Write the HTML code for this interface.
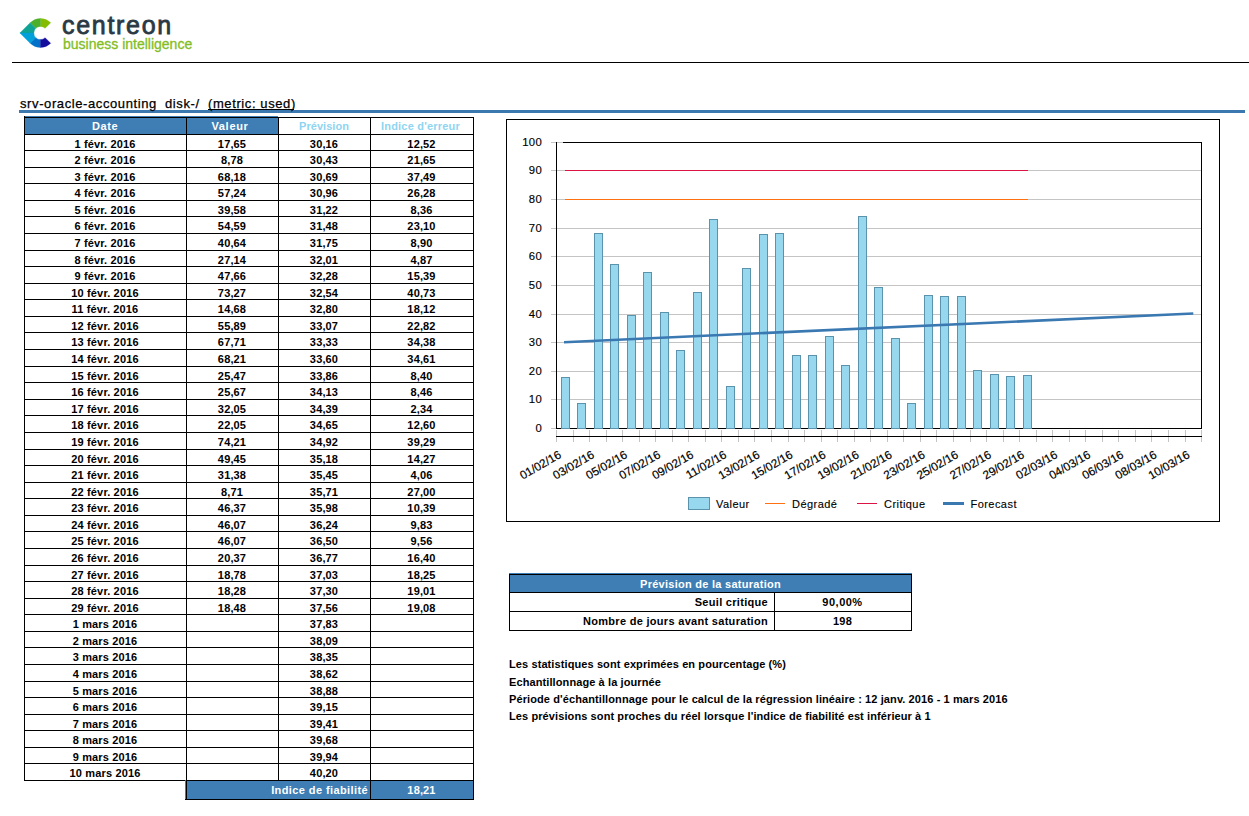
<!DOCTYPE html>
<html><head><meta charset="utf-8"><title>Centreon BI report</title><style>
html,body{margin:0;padding:0;background:#fff}
body{width:1249px;height:816px;position:relative;overflow:hidden;font-family:'Liberation Sans',sans-serif}
.t{position:absolute;white-space:nowrap;line-height:1}
.c{position:absolute;text-align:center;letter-spacing:0.15px;font:bold 11px 'Liberation Sans',sans-serif;color:#000;white-space:nowrap;overflow:visible}
.hl{position:absolute;height:1px;background:#000}
.vl{position:absolute;width:1px;background:#000}
</style></head>
<body>
<svg style="position:absolute;left:0;top:0" width="60" height="60" viewBox="0 0 60 60"><path fill="#84bd00" stroke="#84bd00" stroke-width="0.3" d="M40.450 18.450 A14.55 14.55 0 0 1 50.738 22.712 L45.117 28.333 A6.6 6.6 0 0 0 40.450 26.400 Z"/><path fill="#4baf2a" stroke="#4baf2a" stroke-width="0.3" d="M30.162 22.712 A14.55 14.55 0 0 1 40.450 18.450 L40.450 26.400 A6.6 6.6 0 0 0 35.783 28.333 Z"/><path fill="#0fa394" stroke="#0fa394" stroke-width="0.3" d="M19.873 33.000 L30.162 22.712 L35.783 28.333 A6.6 6.6 0 0 0 33.850 33.000 Z"/><path fill="#00a0da" stroke="#00a0da" stroke-width="0.3" d="M33.850 33.000 A6.6 6.6 0 0 0 35.783 37.667 L30.162 43.288 L19.873 33.000 Z"/><path fill="#0071c9" stroke="#0071c9" stroke-width="0.3" d="M40.450 47.550 A14.55 14.55 0 0 1 30.162 43.288 L35.783 37.667 A6.6 6.6 0 0 0 40.450 39.600 Z"/><path fill="#140c9c" stroke="#140c9c" stroke-width="0.3" d="M50.738 43.288 A14.55 14.55 0 0 1 40.450 47.550 L40.450 39.600 A6.6 6.6 0 0 0 45.117 37.667 Z"/></svg>
<div class="t" style="left:62px;top:11px;font:25px 'Liberation Sans',sans-serif;color:#2b3944;letter-spacing:1.7px;-webkit-text-stroke:0.8px #2b3944">centreon</div>
<div class="t" style="left:63px;top:36px;font:14px 'Liberation Sans',sans-serif;color:#84bd1f;letter-spacing:0px;-webkit-text-stroke:0.3px #84bd1f">business intelligence</div>
<div style="position:absolute;left:12px;top:62px;width:1237px;height:1px;background:#000"></div>
<div style="position:absolute;left:19px;top:110px;width:1226px;height:3px;background:#3b78b0"></div>
<div class="t" style="left:20px;top:95.5px;font:13px 'Liberation Sans',sans-serif;color:#000;letter-spacing:0.6px;-webkit-text-stroke:0.25px #000">srv-oracle-accounting</div>
<div class="t" style="left:165px;top:95.5px;font:13px 'Liberation Sans',sans-serif;color:#000;letter-spacing:0.6px;-webkit-text-stroke:0.25px #000">disk-/</div>
<div class="t" style="left:208px;top:95.5px;font:13px 'Liberation Sans',sans-serif;color:#000;letter-spacing:0.6px;-webkit-text-stroke:0.25px #000">(metric: used)</div>
<div style="position:absolute;left:208px;top:109px;width:86px;height:1px;background:#000"></div>
<div style="position:absolute;left:24px;top:116px;width:254px;height:18px;background:#3e7eb4"></div>
<div class="vl" style="left:24px;top:116px;height:2px"></div>
<div class="c" style="left:24px;width:162px;top:117px;height:17px;line-height:19px;color:#fff;letter-spacing:0.6px">Date</div>
<div class="c" style="left:184px;width:92px;top:117px;height:17px;line-height:19px;color:#fff;letter-spacing:0.7px">Valeur</div>
<div class="c" style="left:278px;width:92px;top:117px;height:17px;line-height:19px;color:#8fd5f0;letter-spacing:0.05px">Prévision</div>
<div class="c" style="left:369px;width:103px;top:117px;height:17px;line-height:19px;color:#8fd5f0;letter-spacing:0.2px">Indice d'erreur</div>
<div class="c" style="left:24px;width:162px;top:134px;height:16px;line-height:21px">1 févr. 2016</div>
<div class="c" style="left:186px;width:92px;top:134px;height:16px;line-height:21px">17,65</div>
<div class="c" style="left:278px;width:92px;top:134px;height:16px;line-height:21px">30,16</div>
<div class="c" style="left:370px;width:103px;top:134px;height:16px;line-height:21px">12,52</div>
<div class="c" style="left:24px;width:162px;top:150px;height:17px;line-height:21px">2 févr. 2016</div>
<div class="c" style="left:186px;width:92px;top:150px;height:17px;line-height:21px">8,78</div>
<div class="c" style="left:278px;width:92px;top:150px;height:17px;line-height:21px">30,43</div>
<div class="c" style="left:370px;width:103px;top:150px;height:17px;line-height:21px">21,65</div>
<div class="c" style="left:24px;width:162px;top:167px;height:16px;line-height:21px">3 févr. 2016</div>
<div class="c" style="left:186px;width:92px;top:167px;height:16px;line-height:21px">68,18</div>
<div class="c" style="left:278px;width:92px;top:167px;height:16px;line-height:21px">30,69</div>
<div class="c" style="left:370px;width:103px;top:167px;height:16px;line-height:21px">37,49</div>
<div class="c" style="left:24px;width:162px;top:183px;height:17px;line-height:21px">4 févr. 2016</div>
<div class="c" style="left:186px;width:92px;top:183px;height:17px;line-height:21px">57,24</div>
<div class="c" style="left:278px;width:92px;top:183px;height:17px;line-height:21px">30,96</div>
<div class="c" style="left:370px;width:103px;top:183px;height:17px;line-height:21px">26,28</div>
<div class="c" style="left:24px;width:162px;top:200px;height:16px;line-height:21px">5 févr. 2016</div>
<div class="c" style="left:186px;width:92px;top:200px;height:16px;line-height:21px">39,58</div>
<div class="c" style="left:278px;width:92px;top:200px;height:16px;line-height:21px">31,22</div>
<div class="c" style="left:370px;width:103px;top:200px;height:16px;line-height:21px">8,36</div>
<div class="c" style="left:24px;width:162px;top:216px;height:17px;line-height:21px">6 févr. 2016</div>
<div class="c" style="left:186px;width:92px;top:216px;height:17px;line-height:21px">54,59</div>
<div class="c" style="left:278px;width:92px;top:216px;height:17px;line-height:21px">31,48</div>
<div class="c" style="left:370px;width:103px;top:216px;height:17px;line-height:21px">23,10</div>
<div class="c" style="left:24px;width:162px;top:233px;height:17px;line-height:21px">7 févr. 2016</div>
<div class="c" style="left:186px;width:92px;top:233px;height:17px;line-height:21px">40,64</div>
<div class="c" style="left:278px;width:92px;top:233px;height:17px;line-height:21px">31,75</div>
<div class="c" style="left:370px;width:103px;top:233px;height:17px;line-height:21px">8,90</div>
<div class="c" style="left:24px;width:162px;top:250px;height:16px;line-height:21px">8 févr. 2016</div>
<div class="c" style="left:186px;width:92px;top:250px;height:16px;line-height:21px">27,14</div>
<div class="c" style="left:278px;width:92px;top:250px;height:16px;line-height:21px">32,01</div>
<div class="c" style="left:370px;width:103px;top:250px;height:16px;line-height:21px">4,87</div>
<div class="c" style="left:24px;width:162px;top:266px;height:17px;line-height:21px">9 févr. 2016</div>
<div class="c" style="left:186px;width:92px;top:266px;height:17px;line-height:21px">47,66</div>
<div class="c" style="left:278px;width:92px;top:266px;height:17px;line-height:21px">32,28</div>
<div class="c" style="left:370px;width:103px;top:266px;height:17px;line-height:21px">15,39</div>
<div class="c" style="left:24px;width:162px;top:283px;height:16px;line-height:21px">10 févr. 2016</div>
<div class="c" style="left:186px;width:92px;top:283px;height:16px;line-height:21px">73,27</div>
<div class="c" style="left:278px;width:92px;top:283px;height:16px;line-height:21px">32,54</div>
<div class="c" style="left:370px;width:103px;top:283px;height:16px;line-height:21px">40,73</div>
<div class="c" style="left:24px;width:162px;top:299px;height:17px;line-height:21px">11 févr. 2016</div>
<div class="c" style="left:186px;width:92px;top:299px;height:17px;line-height:21px">14,68</div>
<div class="c" style="left:278px;width:92px;top:299px;height:17px;line-height:21px">32,80</div>
<div class="c" style="left:370px;width:103px;top:299px;height:17px;line-height:21px">18,12</div>
<div class="c" style="left:24px;width:162px;top:316px;height:16px;line-height:21px">12 févr. 2016</div>
<div class="c" style="left:186px;width:92px;top:316px;height:16px;line-height:21px">55,89</div>
<div class="c" style="left:278px;width:92px;top:316px;height:16px;line-height:21px">33,07</div>
<div class="c" style="left:370px;width:103px;top:316px;height:16px;line-height:21px">22,82</div>
<div class="c" style="left:24px;width:162px;top:332px;height:17px;line-height:21px">13 févr. 2016</div>
<div class="c" style="left:186px;width:92px;top:332px;height:17px;line-height:21px">67,71</div>
<div class="c" style="left:278px;width:92px;top:332px;height:17px;line-height:21px">33,33</div>
<div class="c" style="left:370px;width:103px;top:332px;height:17px;line-height:21px">34,38</div>
<div class="c" style="left:24px;width:162px;top:349px;height:17px;line-height:21px">14 févr. 2016</div>
<div class="c" style="left:186px;width:92px;top:349px;height:17px;line-height:21px">68,21</div>
<div class="c" style="left:278px;width:92px;top:349px;height:17px;line-height:21px">33,60</div>
<div class="c" style="left:370px;width:103px;top:349px;height:17px;line-height:21px">34,61</div>
<div class="c" style="left:24px;width:162px;top:366px;height:16px;line-height:21px">15 févr. 2016</div>
<div class="c" style="left:186px;width:92px;top:366px;height:16px;line-height:21px">25,47</div>
<div class="c" style="left:278px;width:92px;top:366px;height:16px;line-height:21px">33,86</div>
<div class="c" style="left:370px;width:103px;top:366px;height:16px;line-height:21px">8,40</div>
<div class="c" style="left:24px;width:162px;top:382px;height:17px;line-height:21px">16 févr. 2016</div>
<div class="c" style="left:186px;width:92px;top:382px;height:17px;line-height:21px">25,67</div>
<div class="c" style="left:278px;width:92px;top:382px;height:17px;line-height:21px">34,13</div>
<div class="c" style="left:370px;width:103px;top:382px;height:17px;line-height:21px">8,46</div>
<div class="c" style="left:24px;width:162px;top:399px;height:16px;line-height:21px">17 févr. 2016</div>
<div class="c" style="left:186px;width:92px;top:399px;height:16px;line-height:21px">32,05</div>
<div class="c" style="left:278px;width:92px;top:399px;height:16px;line-height:21px">34,39</div>
<div class="c" style="left:370px;width:103px;top:399px;height:16px;line-height:21px">2,34</div>
<div class="c" style="left:24px;width:162px;top:415px;height:17px;line-height:21px">18 févr. 2016</div>
<div class="c" style="left:186px;width:92px;top:415px;height:17px;line-height:21px">22,05</div>
<div class="c" style="left:278px;width:92px;top:415px;height:17px;line-height:21px">34,65</div>
<div class="c" style="left:370px;width:103px;top:415px;height:17px;line-height:21px">12,60</div>
<div class="c" style="left:24px;width:162px;top:432px;height:17px;line-height:21px">19 févr. 2016</div>
<div class="c" style="left:186px;width:92px;top:432px;height:17px;line-height:21px">74,21</div>
<div class="c" style="left:278px;width:92px;top:432px;height:17px;line-height:21px">34,92</div>
<div class="c" style="left:370px;width:103px;top:432px;height:17px;line-height:21px">39,29</div>
<div class="c" style="left:24px;width:162px;top:449px;height:16px;line-height:21px">20 févr. 2016</div>
<div class="c" style="left:186px;width:92px;top:449px;height:16px;line-height:21px">49,45</div>
<div class="c" style="left:278px;width:92px;top:449px;height:16px;line-height:21px">35,18</div>
<div class="c" style="left:370px;width:103px;top:449px;height:16px;line-height:21px">14,27</div>
<div class="c" style="left:24px;width:162px;top:465px;height:17px;line-height:21px">21 févr. 2016</div>
<div class="c" style="left:186px;width:92px;top:465px;height:17px;line-height:21px">31,38</div>
<div class="c" style="left:278px;width:92px;top:465px;height:17px;line-height:21px">35,45</div>
<div class="c" style="left:370px;width:103px;top:465px;height:17px;line-height:21px">4,06</div>
<div class="c" style="left:24px;width:162px;top:482px;height:16px;line-height:21px">22 févr. 2016</div>
<div class="c" style="left:186px;width:92px;top:482px;height:16px;line-height:21px">8,71</div>
<div class="c" style="left:278px;width:92px;top:482px;height:16px;line-height:21px">35,71</div>
<div class="c" style="left:370px;width:103px;top:482px;height:16px;line-height:21px">27,00</div>
<div class="c" style="left:24px;width:162px;top:498px;height:17px;line-height:21px">23 févr. 2016</div>
<div class="c" style="left:186px;width:92px;top:498px;height:17px;line-height:21px">46,37</div>
<div class="c" style="left:278px;width:92px;top:498px;height:17px;line-height:21px">35,98</div>
<div class="c" style="left:370px;width:103px;top:498px;height:17px;line-height:21px">10,39</div>
<div class="c" style="left:24px;width:162px;top:515px;height:16px;line-height:21px">24 févr. 2016</div>
<div class="c" style="left:186px;width:92px;top:515px;height:16px;line-height:21px">46,07</div>
<div class="c" style="left:278px;width:92px;top:515px;height:16px;line-height:21px">36,24</div>
<div class="c" style="left:370px;width:103px;top:515px;height:16px;line-height:21px">9,83</div>
<div class="c" style="left:24px;width:162px;top:531px;height:17px;line-height:21px">25 févr. 2016</div>
<div class="c" style="left:186px;width:92px;top:531px;height:17px;line-height:21px">46,07</div>
<div class="c" style="left:278px;width:92px;top:531px;height:17px;line-height:21px">36,50</div>
<div class="c" style="left:370px;width:103px;top:531px;height:17px;line-height:21px">9,56</div>
<div class="c" style="left:24px;width:162px;top:548px;height:17px;line-height:21px">26 févr. 2016</div>
<div class="c" style="left:186px;width:92px;top:548px;height:17px;line-height:21px">20,37</div>
<div class="c" style="left:278px;width:92px;top:548px;height:17px;line-height:21px">36,77</div>
<div class="c" style="left:370px;width:103px;top:548px;height:17px;line-height:21px">16,40</div>
<div class="c" style="left:24px;width:162px;top:565px;height:16px;line-height:21px">27 févr. 2016</div>
<div class="c" style="left:186px;width:92px;top:565px;height:16px;line-height:21px">18,78</div>
<div class="c" style="left:278px;width:92px;top:565px;height:16px;line-height:21px">37,03</div>
<div class="c" style="left:370px;width:103px;top:565px;height:16px;line-height:21px">18,25</div>
<div class="c" style="left:24px;width:162px;top:581px;height:17px;line-height:21px">28 févr. 2016</div>
<div class="c" style="left:186px;width:92px;top:581px;height:17px;line-height:21px">18,28</div>
<div class="c" style="left:278px;width:92px;top:581px;height:17px;line-height:21px">37,30</div>
<div class="c" style="left:370px;width:103px;top:581px;height:17px;line-height:21px">19,01</div>
<div class="c" style="left:24px;width:162px;top:598px;height:16px;line-height:21px">29 févr. 2016</div>
<div class="c" style="left:186px;width:92px;top:598px;height:16px;line-height:21px">18,48</div>
<div class="c" style="left:278px;width:92px;top:598px;height:16px;line-height:21px">37,56</div>
<div class="c" style="left:370px;width:103px;top:598px;height:16px;line-height:21px">19,08</div>
<div class="c" style="left:24px;width:162px;top:614px;height:17px;line-height:21px">1 mars 2016</div>
<div class="c" style="left:278px;width:92px;top:614px;height:17px;line-height:21px">37,83</div>
<div class="c" style="left:24px;width:162px;top:631px;height:16px;line-height:21px">2 mars 2016</div>
<div class="c" style="left:278px;width:92px;top:631px;height:16px;line-height:21px">38,09</div>
<div class="c" style="left:24px;width:162px;top:647px;height:17px;line-height:21px">3 mars 2016</div>
<div class="c" style="left:278px;width:92px;top:647px;height:17px;line-height:21px">38,35</div>
<div class="c" style="left:24px;width:162px;top:664px;height:17px;line-height:21px">4 mars 2016</div>
<div class="c" style="left:278px;width:92px;top:664px;height:17px;line-height:21px">38,62</div>
<div class="c" style="left:24px;width:162px;top:681px;height:16px;line-height:21px">5 mars 2016</div>
<div class="c" style="left:278px;width:92px;top:681px;height:16px;line-height:21px">38,88</div>
<div class="c" style="left:24px;width:162px;top:697px;height:17px;line-height:21px">6 mars 2016</div>
<div class="c" style="left:278px;width:92px;top:697px;height:17px;line-height:21px">39,15</div>
<div class="c" style="left:24px;width:162px;top:714px;height:16px;line-height:21px">7 mars 2016</div>
<div class="c" style="left:278px;width:92px;top:714px;height:16px;line-height:21px">39,41</div>
<div class="c" style="left:24px;width:162px;top:730px;height:17px;line-height:21px">8 mars 2016</div>
<div class="c" style="left:278px;width:92px;top:730px;height:17px;line-height:21px">39,68</div>
<div class="c" style="left:24px;width:162px;top:747px;height:16px;line-height:21px">9 mars 2016</div>
<div class="c" style="left:278px;width:92px;top:747px;height:16px;line-height:21px">39,94</div>
<div class="c" style="left:24px;width:162px;top:763px;height:17px;line-height:21px">10 mars 2016</div>
<div class="c" style="left:278px;width:92px;top:763px;height:17px;line-height:21px">40,20</div>
<div class="hl" style="left:24px;top:117px;width:450px"></div>
<div class="hl" style="left:24px;top:134px;width:450px"></div>
<div class="hl" style="left:24px;top:150px;width:450px"></div>
<div class="hl" style="left:24px;top:167px;width:450px"></div>
<div class="hl" style="left:24px;top:183px;width:450px"></div>
<div class="hl" style="left:24px;top:200px;width:450px"></div>
<div class="hl" style="left:24px;top:216px;width:450px"></div>
<div class="hl" style="left:24px;top:233px;width:450px"></div>
<div class="hl" style="left:24px;top:250px;width:450px"></div>
<div class="hl" style="left:24px;top:266px;width:450px"></div>
<div class="hl" style="left:24px;top:283px;width:450px"></div>
<div class="hl" style="left:24px;top:299px;width:450px"></div>
<div class="hl" style="left:24px;top:316px;width:450px"></div>
<div class="hl" style="left:24px;top:332px;width:450px"></div>
<div class="hl" style="left:24px;top:349px;width:450px"></div>
<div class="hl" style="left:24px;top:366px;width:450px"></div>
<div class="hl" style="left:24px;top:382px;width:450px"></div>
<div class="hl" style="left:24px;top:399px;width:450px"></div>
<div class="hl" style="left:24px;top:415px;width:450px"></div>
<div class="hl" style="left:24px;top:432px;width:450px"></div>
<div class="hl" style="left:24px;top:449px;width:450px"></div>
<div class="hl" style="left:24px;top:465px;width:450px"></div>
<div class="hl" style="left:24px;top:482px;width:450px"></div>
<div class="hl" style="left:24px;top:498px;width:450px"></div>
<div class="hl" style="left:24px;top:515px;width:450px"></div>
<div class="hl" style="left:24px;top:531px;width:450px"></div>
<div class="hl" style="left:24px;top:548px;width:450px"></div>
<div class="hl" style="left:24px;top:565px;width:450px"></div>
<div class="hl" style="left:24px;top:581px;width:450px"></div>
<div class="hl" style="left:24px;top:598px;width:450px"></div>
<div class="hl" style="left:24px;top:614px;width:450px"></div>
<div class="hl" style="left:24px;top:631px;width:450px"></div>
<div class="hl" style="left:24px;top:647px;width:450px"></div>
<div class="hl" style="left:24px;top:664px;width:450px"></div>
<div class="hl" style="left:24px;top:681px;width:450px"></div>
<div class="hl" style="left:24px;top:697px;width:450px"></div>
<div class="hl" style="left:24px;top:714px;width:450px"></div>
<div class="hl" style="left:24px;top:730px;width:450px"></div>
<div class="hl" style="left:24px;top:747px;width:450px"></div>
<div class="hl" style="left:24px;top:763px;width:450px"></div>
<div class="hl" style="left:24px;top:780px;width:450px"></div>
<div class="vl" style="left:24px;top:117px;height:664px"></div>
<div class="vl" style="left:186px;top:117px;height:664px"></div>
<div class="vl" style="left:278px;top:117px;height:664px"></div>
<div class="vl" style="left:370px;top:117px;height:664px"></div>
<div class="vl" style="left:473px;top:117px;height:664px"></div>
<div style="position:absolute;left:185px;top:780px;width:289px;height:20px;background:#3e7eb4"></div>
<div class="hl" style="left:185px;top:799px;width:2px"></div>
<div class="hl" style="left:186px;top:780px;width:288px"></div>
<div class="hl" style="left:186px;top:799px;width:288px"></div>
<div class="vl" style="left:186px;top:780px;height:20px"></div>
<div class="vl" style="left:370px;top:780px;height:20px"></div>
<div class="vl" style="left:473px;top:780px;height:20px"></div>
<div class="c" style="left:186px;width:182px;top:780px;height:19px;line-height:21px;color:#fff;text-align:right;letter-spacing:0.4px">Indice de fiabilité</div>
<div class="c" style="left:370px;width:103px;top:780px;height:19px;line-height:21px;color:#fff">18,21</div>
<svg style="position:absolute;left:0;top:0" width="1249" height="816" viewBox="0 0 1249 816" shape-rendering="crispEdges">
<rect x="506.5" y="119.5" width="713" height="402" fill="none" stroke="#000" stroke-width="1"/>
<line x1="551" y1="428.5" x2="1201" y2="428.5" stroke="#c4c4c4" stroke-width="1"/>
<line x1="551" y1="399.5" x2="1201" y2="399.5" stroke="#c4c4c4" stroke-width="1"/>
<line x1="551" y1="371.5" x2="1201" y2="371.5" stroke="#c4c4c4" stroke-width="1"/>
<line x1="551" y1="342.5" x2="1201" y2="342.5" stroke="#c4c4c4" stroke-width="1"/>
<line x1="551" y1="314.5" x2="1201" y2="314.5" stroke="#c4c4c4" stroke-width="1"/>
<line x1="551" y1="285.5" x2="1201" y2="285.5" stroke="#c4c4c4" stroke-width="1"/>
<line x1="551" y1="256.5" x2="1201" y2="256.5" stroke="#c4c4c4" stroke-width="1"/>
<line x1="551" y1="228.5" x2="1201" y2="228.5" stroke="#c4c4c4" stroke-width="1"/>
<line x1="551" y1="199.5" x2="1201" y2="199.5" stroke="#c4c4c4" stroke-width="1"/>
<line x1="551" y1="170.5" x2="1201" y2="170.5" stroke="#c4c4c4" stroke-width="1"/>
<line x1="551" y1="142.5" x2="1201" y2="142.5" stroke="#c4c4c4" stroke-width="1"/>
<line x1="563" y1="142.5" x2="1202" y2="142.5" stroke="#000"/>
<line x1="1201.5" y1="142" x2="1201.5" y2="429" stroke="#000"/>
<line x1="556" y1="428.5" x2="1202" y2="428.5" stroke="#000"/>
<line x1="556.5" y1="142" x2="556.5" y2="429" stroke="#000"/>
<line x1="556.5" y1="430" x2="556.5" y2="442" stroke="#c4c4c4"/>
<line x1="573.5" y1="430" x2="573.5" y2="442" stroke="#c4c4c4"/>
<line x1="589.5" y1="430" x2="589.5" y2="442" stroke="#c4c4c4"/>
<line x1="606.5" y1="430" x2="606.5" y2="442" stroke="#c4c4c4"/>
<line x1="622.5" y1="430" x2="622.5" y2="442" stroke="#c4c4c4"/>
<line x1="639.5" y1="430" x2="639.5" y2="442" stroke="#c4c4c4"/>
<line x1="655.5" y1="430" x2="655.5" y2="442" stroke="#c4c4c4"/>
<line x1="672.5" y1="430" x2="672.5" y2="442" stroke="#c4c4c4"/>
<line x1="688.5" y1="430" x2="688.5" y2="442" stroke="#c4c4c4"/>
<line x1="705.5" y1="430" x2="705.5" y2="442" stroke="#c4c4c4"/>
<line x1="721.5" y1="430" x2="721.5" y2="442" stroke="#c4c4c4"/>
<line x1="738.5" y1="430" x2="738.5" y2="442" stroke="#c4c4c4"/>
<line x1="754.5" y1="430" x2="754.5" y2="442" stroke="#c4c4c4"/>
<line x1="771.5" y1="430" x2="771.5" y2="442" stroke="#c4c4c4"/>
<line x1="788.5" y1="430" x2="788.5" y2="442" stroke="#c4c4c4"/>
<line x1="804.5" y1="430" x2="804.5" y2="442" stroke="#c4c4c4"/>
<line x1="821.5" y1="430" x2="821.5" y2="442" stroke="#c4c4c4"/>
<line x1="837.5" y1="430" x2="837.5" y2="442" stroke="#c4c4c4"/>
<line x1="854.5" y1="430" x2="854.5" y2="442" stroke="#c4c4c4"/>
<line x1="870.5" y1="430" x2="870.5" y2="442" stroke="#c4c4c4"/>
<line x1="887.5" y1="430" x2="887.5" y2="442" stroke="#c4c4c4"/>
<line x1="903.5" y1="430" x2="903.5" y2="442" stroke="#c4c4c4"/>
<line x1="920.5" y1="430" x2="920.5" y2="442" stroke="#c4c4c4"/>
<line x1="936.5" y1="430" x2="936.5" y2="442" stroke="#c4c4c4"/>
<line x1="953.5" y1="430" x2="953.5" y2="442" stroke="#c4c4c4"/>
<line x1="970.5" y1="430" x2="970.5" y2="442" stroke="#c4c4c4"/>
<line x1="986.5" y1="430" x2="986.5" y2="442" stroke="#c4c4c4"/>
<line x1="1003.5" y1="430" x2="1003.5" y2="442" stroke="#c4c4c4"/>
<line x1="1019.5" y1="430" x2="1019.5" y2="442" stroke="#c4c4c4"/>
<line x1="1036.5" y1="430" x2="1036.5" y2="442" stroke="#c4c4c4"/>
<line x1="1052.5" y1="430" x2="1052.5" y2="442" stroke="#c4c4c4"/>
<line x1="1069.5" y1="430" x2="1069.5" y2="442" stroke="#c4c4c4"/>
<line x1="1085.5" y1="430" x2="1085.5" y2="442" stroke="#c4c4c4"/>
<line x1="1102.5" y1="430" x2="1102.5" y2="442" stroke="#c4c4c4"/>
<line x1="1118.5" y1="430" x2="1118.5" y2="442" stroke="#c4c4c4"/>
<line x1="1135.5" y1="430" x2="1135.5" y2="442" stroke="#c4c4c4"/>
<line x1="1151.5" y1="430" x2="1151.5" y2="442" stroke="#c4c4c4"/>
<line x1="1168.5" y1="430" x2="1168.5" y2="442" stroke="#c4c4c4"/>
<line x1="1185.5" y1="430" x2="1185.5" y2="442" stroke="#c4c4c4"/>
<line x1="1201.5" y1="430" x2="1201.5" y2="442" stroke="#c4c4c4"/>
<line x1="556" y1="436.5" x2="1202" y2="436.5" stroke="#000"/>
<rect x="561.5" y="377.5" width="8" height="51" fill="#97d8ef" stroke="#5a93ab"/>
<rect x="577.5" y="403.5" width="8" height="25" fill="#97d8ef" stroke="#5a93ab"/>
<rect x="594.5" y="233.5" width="8" height="195" fill="#97d8ef" stroke="#5a93ab"/>
<rect x="610.5" y="264.5" width="8" height="164" fill="#97d8ef" stroke="#5a93ab"/>
<rect x="627.5" y="315.5" width="8" height="113" fill="#97d8ef" stroke="#5a93ab"/>
<rect x="643.5" y="272.5" width="8" height="156" fill="#97d8ef" stroke="#5a93ab"/>
<rect x="660.5" y="312.5" width="8" height="116" fill="#97d8ef" stroke="#5a93ab"/>
<rect x="676.5" y="350.5" width="8" height="78" fill="#97d8ef" stroke="#5a93ab"/>
<rect x="693.5" y="292.5" width="8" height="136" fill="#97d8ef" stroke="#5a93ab"/>
<rect x="709.5" y="219.5" width="8" height="209" fill="#97d8ef" stroke="#5a93ab"/>
<rect x="726.5" y="386.5" width="8" height="42" fill="#97d8ef" stroke="#5a93ab"/>
<rect x="742.5" y="268.5" width="8" height="160" fill="#97d8ef" stroke="#5a93ab"/>
<rect x="759.5" y="234.5" width="8" height="194" fill="#97d8ef" stroke="#5a93ab"/>
<rect x="775.5" y="233.5" width="8" height="195" fill="#97d8ef" stroke="#5a93ab"/>
<rect x="792.5" y="355.5" width="8" height="73" fill="#97d8ef" stroke="#5a93ab"/>
<rect x="808.5" y="355.5" width="8" height="73" fill="#97d8ef" stroke="#5a93ab"/>
<rect x="825.5" y="336.5" width="8" height="92" fill="#97d8ef" stroke="#5a93ab"/>
<rect x="841.5" y="365.5" width="8" height="63" fill="#97d8ef" stroke="#5a93ab"/>
<rect x="858.5" y="216.5" width="8" height="212" fill="#97d8ef" stroke="#5a93ab"/>
<rect x="874.5" y="287.5" width="8" height="141" fill="#97d8ef" stroke="#5a93ab"/>
<rect x="891.5" y="338.5" width="8" height="90" fill="#97d8ef" stroke="#5a93ab"/>
<rect x="907.5" y="403.5" width="8" height="25" fill="#97d8ef" stroke="#5a93ab"/>
<rect x="924.5" y="295.5" width="8" height="133" fill="#97d8ef" stroke="#5a93ab"/>
<rect x="940.5" y="296.5" width="8" height="132" fill="#97d8ef" stroke="#5a93ab"/>
<rect x="957.5" y="296.5" width="8" height="132" fill="#97d8ef" stroke="#5a93ab"/>
<rect x="973.5" y="370.5" width="8" height="58" fill="#97d8ef" stroke="#5a93ab"/>
<rect x="990.5" y="374.5" width="8" height="54" fill="#97d8ef" stroke="#5a93ab"/>
<rect x="1006.5" y="376.5" width="8" height="52" fill="#97d8ef" stroke="#5a93ab"/>
<rect x="1023.5" y="375.5" width="8" height="53" fill="#97d8ef" stroke="#5a93ab"/>
<line x1="565" y1="170.5" x2="1027.9" y2="170.5" stroke="#dc1446"/>
<line x1="565" y1="199.5" x2="1027.9" y2="199.5" stroke="#ff7010"/>
</svg>
<svg style="position:absolute;left:0;top:0" width="1249" height="816" viewBox="0 0 1249 816">
<line x1="564" y1="342.18" x2="1193.29" y2="313.50" stroke="#3a78b2" stroke-width="2.6"/>
<text x="542" y="431.6" text-anchor="end" font-family="Liberation Sans" font-size="11.3" fill="#000" stroke="#000" stroke-width="0.15" letter-spacing="0.3">0</text>
<text x="542" y="402.6" text-anchor="end" font-family="Liberation Sans" font-size="11.3" fill="#000" stroke="#000" stroke-width="0.15" letter-spacing="0.3">10</text>
<text x="542" y="374.6" text-anchor="end" font-family="Liberation Sans" font-size="11.3" fill="#000" stroke="#000" stroke-width="0.15" letter-spacing="0.3">20</text>
<text x="542" y="345.6" text-anchor="end" font-family="Liberation Sans" font-size="11.3" fill="#000" stroke="#000" stroke-width="0.15" letter-spacing="0.3">30</text>
<text x="542" y="317.6" text-anchor="end" font-family="Liberation Sans" font-size="11.3" fill="#000" stroke="#000" stroke-width="0.15" letter-spacing="0.3">40</text>
<text x="542" y="288.6" text-anchor="end" font-family="Liberation Sans" font-size="11.3" fill="#000" stroke="#000" stroke-width="0.15" letter-spacing="0.3">50</text>
<text x="542" y="259.6" text-anchor="end" font-family="Liberation Sans" font-size="11.3" fill="#000" stroke="#000" stroke-width="0.15" letter-spacing="0.3">60</text>
<text x="542" y="231.6" text-anchor="end" font-family="Liberation Sans" font-size="11.3" fill="#000" stroke="#000" stroke-width="0.15" letter-spacing="0.3">70</text>
<text x="542" y="202.6" text-anchor="end" font-family="Liberation Sans" font-size="11.3" fill="#000" stroke="#000" stroke-width="0.15" letter-spacing="0.3">80</text>
<text x="542" y="173.6" text-anchor="end" font-family="Liberation Sans" font-size="11.3" fill="#000" stroke="#000" stroke-width="0.15" letter-spacing="0.3">90</text>
<text x="542" y="145.6" text-anchor="end" font-family="Liberation Sans" font-size="11.3" fill="#000" stroke="#000" stroke-width="0.15" letter-spacing="0.3">100</text>
<text transform="translate(562.07,457) rotate(-30)" text-anchor="end" font-family="Liberation Sans" font-size="11.7" fill="#000" stroke="#000" stroke-width="0.2">01/02/16</text>
<text transform="translate(595.15,457) rotate(-30)" text-anchor="end" font-family="Liberation Sans" font-size="11.7" fill="#000" stroke="#000" stroke-width="0.2">03/02/16</text>
<text transform="translate(628.23,457) rotate(-30)" text-anchor="end" font-family="Liberation Sans" font-size="11.7" fill="#000" stroke="#000" stroke-width="0.2">05/02/16</text>
<text transform="translate(661.31,457) rotate(-30)" text-anchor="end" font-family="Liberation Sans" font-size="11.7" fill="#000" stroke="#000" stroke-width="0.2">07/02/16</text>
<text transform="translate(694.39,457) rotate(-30)" text-anchor="end" font-family="Liberation Sans" font-size="11.7" fill="#000" stroke="#000" stroke-width="0.2">09/02/16</text>
<text transform="translate(727.47,457) rotate(-30)" text-anchor="end" font-family="Liberation Sans" font-size="11.7" fill="#000" stroke="#000" stroke-width="0.2">11/02/16</text>
<text transform="translate(760.55,457) rotate(-30)" text-anchor="end" font-family="Liberation Sans" font-size="11.7" fill="#000" stroke="#000" stroke-width="0.2">13/02/16</text>
<text transform="translate(793.63,457) rotate(-30)" text-anchor="end" font-family="Liberation Sans" font-size="11.7" fill="#000" stroke="#000" stroke-width="0.2">15/02/16</text>
<text transform="translate(826.71,457) rotate(-30)" text-anchor="end" font-family="Liberation Sans" font-size="11.7" fill="#000" stroke="#000" stroke-width="0.2">17/02/16</text>
<text transform="translate(859.79,457) rotate(-30)" text-anchor="end" font-family="Liberation Sans" font-size="11.7" fill="#000" stroke="#000" stroke-width="0.2">19/02/16</text>
<text transform="translate(892.87,457) rotate(-30)" text-anchor="end" font-family="Liberation Sans" font-size="11.7" fill="#000" stroke="#000" stroke-width="0.2">21/02/16</text>
<text transform="translate(925.95,457) rotate(-30)" text-anchor="end" font-family="Liberation Sans" font-size="11.7" fill="#000" stroke="#000" stroke-width="0.2">23/02/16</text>
<text transform="translate(959.03,457) rotate(-30)" text-anchor="end" font-family="Liberation Sans" font-size="11.7" fill="#000" stroke="#000" stroke-width="0.2">25/02/16</text>
<text transform="translate(992.11,457) rotate(-30)" text-anchor="end" font-family="Liberation Sans" font-size="11.7" fill="#000" stroke="#000" stroke-width="0.2">27/02/16</text>
<text transform="translate(1025.19,457) rotate(-30)" text-anchor="end" font-family="Liberation Sans" font-size="11.7" fill="#000" stroke="#000" stroke-width="0.2">29/02/16</text>
<text transform="translate(1058.27,457) rotate(-30)" text-anchor="end" font-family="Liberation Sans" font-size="11.7" fill="#000" stroke="#000" stroke-width="0.2">02/03/16</text>
<text transform="translate(1091.35,457) rotate(-30)" text-anchor="end" font-family="Liberation Sans" font-size="11.7" fill="#000" stroke="#000" stroke-width="0.2">04/03/16</text>
<text transform="translate(1124.43,457) rotate(-30)" text-anchor="end" font-family="Liberation Sans" font-size="11.7" fill="#000" stroke="#000" stroke-width="0.2">06/03/16</text>
<text transform="translate(1157.51,457) rotate(-30)" text-anchor="end" font-family="Liberation Sans" font-size="11.7" fill="#000" stroke="#000" stroke-width="0.2">08/03/16</text>
<text transform="translate(1190.59,457) rotate(-30)" text-anchor="end" font-family="Liberation Sans" font-size="11.7" fill="#000" stroke="#000" stroke-width="0.2">10/03/16</text>
<rect x="688.5" y="497.5" width="21" height="12" fill="#97d8ef" stroke="#5a93ab" shape-rendering="crispEdges"/>
<text x="716" y="508" font-family="Liberation Sans" font-size="11" fill="#000" stroke="#000" stroke-width="0.12" letter-spacing="0.45">Valeur</text>
<line x1="765" y1="503.5" x2="785" y2="503.5" stroke="#ff7010" shape-rendering="crispEdges"/>
<text x="792" y="508" font-family="Liberation Sans" font-size="11" fill="#000" stroke="#000" stroke-width="0.12" letter-spacing="0.45">Dégradé</text>
<line x1="857" y1="503.5" x2="877" y2="503.5" stroke="#dc1446" shape-rendering="crispEdges"/>
<text x="884" y="508" font-family="Liberation Sans" font-size="11" fill="#000" stroke="#000" stroke-width="0.12" letter-spacing="0.45">Critique</text>
<rect x="943" y="502" width="21" height="3" fill="#3a78b2"/>
<text x="970.5" y="508" font-family="Liberation Sans" font-size="11" fill="#000" stroke="#000" stroke-width="0.12" letter-spacing="0.45">Forecast</text>
</svg>
<div style="position:absolute;left:509px;top:573px;width:403px;height:19px;background:#3e7eb4"></div>
<div class="hl" style="left:509px;top:574px;width:403px"></div>
<div class="hl" style="left:509px;top:592px;width:403px"></div>
<div class="hl" style="left:509px;top:611px;width:403px"></div>
<div class="hl" style="left:509px;top:630px;width:403px"></div>
<div class="vl" style="left:509px;top:574px;height:57px"></div>
<div class="vl" style="left:911px;top:574px;height:57px"></div>
<div class="vl" style="left:774px;top:592px;height:39px"></div>
<div class="c" style="left:509px;width:403px;top:574px;height:18px;line-height:20px;color:#fff;letter-spacing:0.27px">Prévision de la saturation</div>
<div class="c" style="left:509px;width:259px;top:592px;height:19px;line-height:21px;text-align:right;letter-spacing:0.3px">Seuil critique</div>
<div class="c" style="left:774px;width:137px;top:592px;height:19px;line-height:21px;letter-spacing:0.5px">90,00%</div>
<div class="c" style="left:509px;width:259px;top:611px;height:19px;line-height:21px;text-align:right;letter-spacing:0.3px">Nombre de jours avant saturation</div>
<div class="c" style="left:774px;width:137px;top:611px;height:19px;line-height:21px">198</div>
<div class="t" style="left:509px;top:658px;font:bold 11px 'Liberation Sans',sans-serif;letter-spacing:0.1px">Les statistiques sont exprimées en pourcentage (%)</div>
<div class="t" style="left:509px;top:676px;font:bold 11px 'Liberation Sans',sans-serif;letter-spacing:0.1px">Echantillonnage à la journée</div>
<div class="t" style="left:509px;top:693px;font:bold 11px 'Liberation Sans',sans-serif;letter-spacing:0.1px">Période d'échantillonnage pour le calcul de la régression linéaire : 12 janv. 2016 - 1 mars 2016</div>
<div class="t" style="left:509px;top:710px;font:bold 11px 'Liberation Sans',sans-serif;letter-spacing:0.1px">Les prévisions sont proches du réel lorsque l'indice de fiabilité est inférieur à 1</div>
</body></html>
